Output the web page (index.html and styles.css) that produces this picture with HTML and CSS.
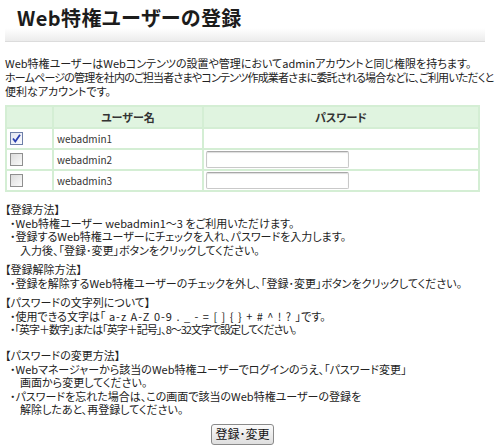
FILE: index.html
```html
<!DOCTYPE html>
<html lang="ja">
<head>
<meta charset="utf-8">
<title>Web特権ユーザーの登録</title>
<link rel="stylesheet" href="styles.css">
</head>
<body>
<div class="page">
  <div class="header"><h1 class="title">Web特権ユーザーの登録</h1></div>

  <p class="intro">Web特権ユーザーはWebコンテンツの設置や管理においてadminアカウントと同じ権限を持ちます。<br><span class="tight">ホームページの管理を社内のご担当者さまやコンテンツ作成業者さまに委託される場合などに、ご利用いただくと</span><br>便利なアカウントです。</p>

  <table class="users">
    <thead>
      <tr><th class="c-check"></th><th class="c-name">ユーザー名</th><th class="c-pass">パスワード</th></tr>
    </thead>
    <tbody>
      <tr>
        <td class="c-check"><span class="cb checked"><svg width="11" height="11" viewBox="0 0 11 11"><path d="M2 5.5 L4.3 8.5 L9 1.8" fill="none" stroke="#2a3fb0" stroke-width="1.8"/></svg></span></td>
        <td class="c-name">webadmin1</td>
        <td class="c-pass"></td>
      </tr>
      <tr>
        <td class="c-check"><span class="cb"></span></td>
        <td class="c-name">webadmin2</td>
        <td class="c-pass"><input class="pw" type="text"></td>
      </tr>
      <tr>
        <td class="c-check"><span class="cb"></span></td>
        <td class="c-name">webadmin3</td>
        <td class="c-pass"><input class="pw" type="text"></td>
      </tr>
    </tbody>
  </table>

  <div class="section s1">
    <p class="head">【登録方法】</p>
    <p class="item">・Web特権ユーザー webadmin1～3 をご利用いただけます。</p>
    <p class="item">・登録するWeb特権ユーザーにチェックを入れ、パスワードを入力します。<br><span class="cont">入力後、「登録･変更」ボタンをクリックしてください。</span></p>
  </div>

  <div class="section s2">
    <p class="head">【登録解除方法】</p>
    <p class="item">・登録を解除するWeb特権ユーザーのチェックを外し、「登録･変更」ボタンをクリックしてください。</p>
  </div>

  <div class="section s3">
    <p class="head">【パスワードの文字列について】</p>
    <p class="item">・使用できる文字は「<span class="sym"> a-z A-Z 0-9 . _ - = [ ] { } + # ^ ! ? </span>」です。</p>
    <p class="item narrow">・「英字＋数字」または「英字＋記号」、8～32文字で設定してください。</p>
  </div>

  <div class="section s4">
    <p class="head">【パスワードの変更方法】</p>
    <p class="item">・Webマネージャーから該当のWeb特権ユーザーでログインのうえ、「パスワード変更」<br><span class="cont">画面から変更してください。</span></p>
    <p class="item">・パスワードを忘れた場合は、この画面で該当のWeb特権ユーザーの登録を<br><span class="cont">解除したあと、再登録してください。</span></p>
  </div>

  <div class="actions"><button class="btn" type="button">登録･変更</button></div>
</div>
</body>
</html>
```
FILE: styles.css
```css
html, body {
  margin: 0;
  padding: 0;
  background: #fff;
}
body {
  font-family: "Noto Sans CJK JP", "Noto Sans", sans-serif;
  font-feature-settings: "palt";
  color: #222;
  font-size: 11px;
  line-height: 13.5px;
}
.page {
  width: 480px;
  padding-left: 5px;
}
.header {
  height: 41px;
  border-bottom: 1px solid #dcdcdc;
  background: linear-gradient(to bottom, #fff 0, #fff 28px, #ececec 41px);
  padding-left: 12px;
}
.title {
  margin: 0;
  padding-top: 5px;
  font-size: 20px;
  line-height: 26px;
  font-weight: bold;
  color: #1c1c1c;
  letter-spacing: 0.4px;
}
.intro {
  margin: 14px 0 0 0;
  line-height: 14px;
  white-space: nowrap;
}
.tight { letter-spacing: -0.8px; }
.users {
  margin-top: 7px;
  width: 475px;
  border-collapse: collapse;
  border: 2px solid #d4eed4;
}
.users th, .users td {
  border: 2px solid #d4eed4;
  padding: 0;
  text-align: left;
  vertical-align: middle;
}
.users th {
  background: #e0f4e0;
  height: 20px;
  line-height: 20px;
  text-align: center;
  font-weight: bold;
  font-size: 11px;
  color: #333;
}
.users td {
  height: 19px;
  line-height: 19px;
  font-size: 10px;
  color: #333;
}
.c-check { width: 42px; }
.users td.c-check { padding-left: 3px; }
.c-name { width: 145px; }
.users td.c-name { padding-left: 3px; }
.users td.c-pass { padding-left: 2px; }
.cb {
  display: flex;
  align-items: center;
  justify-content: center;
  width: 11px;
  height: 11px;
  border: 1px solid #8f8f8f;
  background: linear-gradient(to bottom right, #dcdcdc, #fafafa);
}
.cb.checked {
  border-color: #6e7fa8;
  background: linear-gradient(to bottom right, #e2e6f0, #fbfbff);
}
.pw {
  display: block;
  box-sizing: border-box;
  width: 143px;
  height: 17px;
  margin: 0;
  border: 1px solid #c9c9c9;
  border-top-color: #a8a8a8;
  border-radius: 2px;
  box-shadow: inset 0 1px 1px #ddd;
  background: #fff;
  padding: 0 2px;
  font-size: 10px;
}
.section { line-height: 13.5px; }
.section p { margin: 0; white-space: nowrap; }
.s1 { margin-top: 11px; }
.s2 { margin-top: 6px; }
.s3 { margin-top: 6px; }
.s4 { margin-top: 12.5px; }
.head { margin-left: -2px; }
.item { padding-left: 5px; }
.cont { padding-left: 10px; }
.sym { letter-spacing: 1px; }
.narrow { letter-spacing: -1px; }
.actions {
  margin-top: 7px;
  display: flex;
  justify-content: center;
  width: 475px;
}
.btn {
  font-family: "Noto Sans CJK JP", sans-serif;
  font-size: 12px;
  line-height: 16px;
  height: 21px;
  padding: 0 3px;
  color: #111;
  border: 1px solid #8a8a8a;
  border-radius: 3px;
  background: linear-gradient(to bottom, #fbfbfb, #dedede);
}
```
